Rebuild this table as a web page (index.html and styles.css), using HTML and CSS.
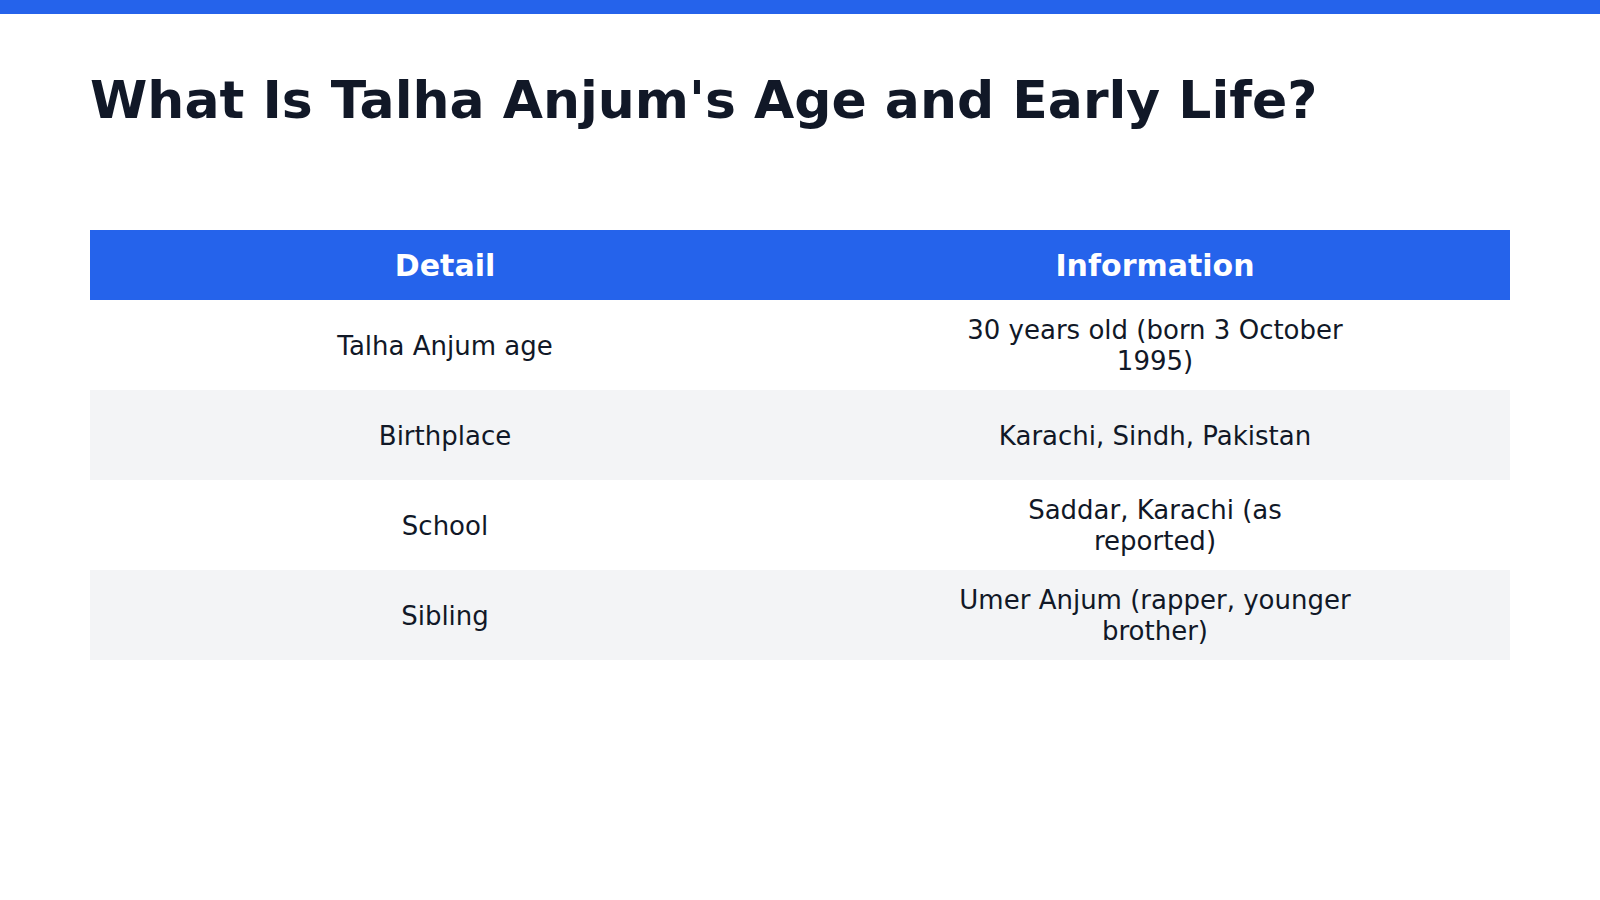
FILE: index.html
```html
<!DOCTYPE html>
<html lang="en">
<head>
<meta charset="utf-8">
<title>What Is Talha Anjum's Age and Early Life?</title>
<link rel="stylesheet" href="styles.css">
</head>
<body>
<div class="topbar"></div>
<main class="content">
  <h1 class="title">What Is Talha Anjum's Age and Early Life?</h1>
  <table class="info-table">
    <thead>
      <tr><th>Detail</th><th>Information</th></tr>
    </thead>
    <tbody>
      <tr><td>Talha Anjum age</td><td>30 years old (born 3 October<br>1995)</td></tr>
      <tr><td>Birthplace</td><td>Karachi, Sindh, Pakistan</td></tr>
      <tr><td>School</td><td>Saddar, Karachi (as<br>reported)</td></tr>
      <tr><td>Sibling</td><td>Umer Anjum (rapper, younger<br>brother)</td></tr>
    </tbody>
  </table>
</main>
</body>
</html>
```

FILE: styles.css
```css
html, body {
  margin: 0;
  padding: 0;
  background: #ffffff;
}
body {
  font-family: "DejaVu Sans", "Liberation Sans", sans-serif;
  color: #111827;
}
.topbar {
  height: 14px;
  background: #2563eb;
}
.content {
  padding: 55px 90px 0;
}
.title {
  margin: 0;
  font-size: 52px;
  line-height: 1.2;
  font-weight: 700;
  color: #111827;
}
.info-table {
  margin-top: 99px;
  width: 100%;
  border-collapse: collapse;
  table-layout: fixed;
}
.info-table th {
  background: #2563eb;
  color: #ffffff;
  font-size: 30px;
  font-weight: 700;
  height: 69px;
  padding: 1px 0 0;
  text-align: center;
  vertical-align: middle;
  line-height: 1.2;
}
.info-table td {
  height: 88px;
  padding: 2px 0 0;
  font-size: 26px;
  line-height: 1.2;
  text-align: center;
  vertical-align: middle;
  color: #111827;
}
.info-table tbody tr:nth-child(even) td {
  background: #f3f4f6;
}
```
